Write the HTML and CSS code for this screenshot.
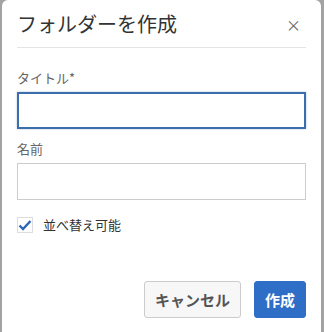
FILE: index.html
```html
<!DOCTYPE html>
<html lang="ja">
<head>
  <meta charset="UTF-8">
  <title>フォルダーを作成</title>
  <link rel="stylesheet" href="styles.css">
</head>
<body>
  <div class="dialog">
    <div class="dialog-header">
      <h2>フォルダーを作成</h2>
      <span class="close">&times;</span>
    </div>
    <form class="dialog-body">
      <div class="form-group">
        <label for="title">タイトル*</label>
        <input type="text" id="title" class="focused">
      </div>
      <div class="form-group">
        <label for="name">名前</label>
        <input type="text" id="name">
      </div>
      <label class="check">
        <span class="box">
          <svg width="14" height="12" viewBox="0 0 14 12"><path d="M1.5 6.5 L5 10 L12.5 2" fill="none" stroke="#2f65b8" stroke-width="2.4"/></svg>
        </span>
        並べ替え可能
      </label>
      <div class="actions">
        <button type="button" class="btn">キャンセル</button>
        <button type="button" class="btn btn-primary">作成</button>
      </div>
    </form>
  </div>
</body>
</html>
```

FILE: styles.css
```css
body { margin: 0; padding: 0; background: #a3a3a3; font-family: "Noto Sans CJK JP", "Noto Sans", sans-serif; color: #333; }
.dialog { margin-left: 2px; width: 319px; height: 332px; background: #fff; border-radius: 6px 6px 0 0; box-sizing: border-box; padding: 0 15px; }
.dialog-header { display: flex; justify-content: space-between; align-items: center; height: 47px; border-bottom: 1px solid #e5e5e5; }
h2 { margin: 0; font-size: 20px; font-weight: 400; color: #333; }
.close { font-size: 15px; color: #666; margin-right: 5px; margin-top: 2px; }
.dialog-body { padding-top: 22px; }
.form-group { margin-bottom: 12px; }
.form-group label { display: block; font-size: 13px; color: #666; margin-bottom: 6px; line-height: 16px; }
input { display: block; width: 100%; height: 37px; box-sizing: border-box; border: 1px solid #ccc; border-radius: 0; padding: 6px 10px; font-size: 14px; }
input.focused { border: 2px solid #3c6eae; box-shadow: 0 0 2px rgba(60, 110, 174, 0.4); }
.check { display: flex; align-items: center; gap: 10px; font-size: 13px; line-height: 16px; color: #333; margin-top: 17px; }
.box { width: 14px; height: 14px; border: 1px solid #ddd; display: flex; align-items: center; justify-content: center; }
.actions { display: flex; justify-content: flex-end; gap: 13px; margin-top: 48px; }
.btn { height: 37px; padding: 0 10px; font-family: inherit; font-size: 15px; font-weight: 700; color: #555; background: #f7f7f7; border: 1px solid #ccc; border-radius: 3px; }
.btn-primary { background: #2f6ec6; border-color: #2f6ec6; color: #fff; padding: 0 10px; }
```
